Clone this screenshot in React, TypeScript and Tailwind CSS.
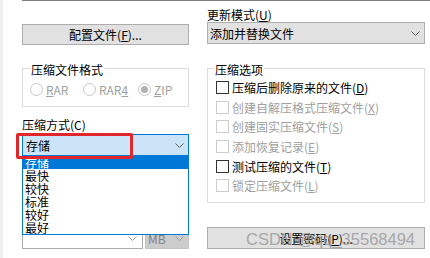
import { ReactNode } from "react";

const Chevron = ({ color = "#606060" }: { color?: string }) => (
  <svg width="9" height="5" viewBox="0 0 9 5" className="shrink-0">
    <path d="M0.5 0.5 L4.5 4.5 L8.5 0.5" fill="none" stroke={color} strokeWidth="1" />
  </svg>
);

const Radio = ({ checked, children }: { checked?: boolean; children: ReactNode }) => (
  <div className="flex items-center">
    <span className="flex h-[13px] w-[13px] items-center justify-center rounded-full border border-[#c6c6c6] bg-white">
      {checked && <span className="h-[7px] w-[7px] rounded-full bg-[#b2b2b2]" />}
    </span>
    <span className="ml-[3px] leading-[13px] text-[#a0a0a0]">{children}</span>
  </div>
);

const Check = ({ disabled, children }: { disabled?: boolean; children: ReactNode }) => (
  <div className="flex h-[19.6px] items-center">
    <span
      className={
        disabled
          ? "h-[13px] w-[13px] border border-[#cccccc] bg-white"
          : "h-[13px] w-[13px] border border-[#333333] bg-white"
      }
    />
    <span className={disabled ? "ml-[3px] leading-[13px] text-[#a0a0a0]" : "ml-[3px] leading-[13px] text-black"}>
      {children}
    </span>
  </div>
);

const methods = ["存储", "最快", "较快", "标准", "较好", "最好"];

export default function App() {
  return (
    <div className="relative flex h-[258px] w-[430px] flex-col overflow-hidden border-l-[3px] border-[#efefef] bg-white font-['Noto_Sans_CJK_SC',sans-serif] text-[12px] text-black">
      <div className="ml-[19px] h-px bg-[#7f7f7f]" />

      <div className="flex gap-[18px] pl-[19px]">
        {/* left column */}
        <div className="relative flex w-[167px] flex-col">
          <div className="mt-[23px] flex h-[21px] items-center justify-center border border-[#adadad] bg-[#e1e1e1] leading-[13px]">
            配置文件(<span className="underline">F</span>)...
          </div>

          <div className="relative mt-[23px] h-[39px] border border-[#dcdcdc]">
            <span className="absolute -top-[6px] left-[7px] bg-white px-px leading-[13px]">压缩文件格式</span>
            <div className="flex pl-[7px] pt-[14px]">
              <div className="w-[53px]">
                <Radio>
                  <span className="underline">R</span>AR
                </Radio>
              </div>
              <div className="w-[55px]">
                <Radio>
                  RAR<span className="underline">4</span>
                </Radio>
              </div>
              <Radio checked>
                <span className="underline">Z</span>IP
              </Radio>
            </div>
          </div>

          <div className="mt-[11px] leading-[13px]">压缩方式(C)</div>
          <div className="mt-[3px] flex h-[22px] items-center justify-between border border-[#0078d7] bg-[#cce4f7] pl-[3px] pr-[4px]">
            <span className="leading-[13px]">存储</span>
            <Chevron />
          </div>

          <div className="mt-[71px] flex gap-[2px]">
            <div className="flex h-[22px] w-[121px] items-center justify-end border border-[#adadad] bg-white pr-[5px]">
              <Chevron color="#a0a0a0" />
            </div>
            <div className="flex h-[22px] w-[44px] items-center justify-between border border-[#c4c4c4] bg-[#cccccc] pl-[2px] pr-[4px]">
              <span className="leading-[13px] text-[#838383]">MB</span>
              <Chevron color="#a0a0a0" />
            </div>
          </div>

          {/* opened drop-down list */}
          <div className="absolute left-0 top-[154px] w-[167px] border border-[#0078d7] bg-white">
            {methods.map((m, i) => (
              <div
                key={m}
                className={
                  i === 0
                    ? "h-[13px] bg-[#0078d7] pl-[2px] leading-[13px] text-white"
                    : "h-[13px] pl-[2px] leading-[13px] text-black"
                }
              >
                {m}
              </div>
            ))}
          </div>

          {/* red annotation box */}
          <div className="absolute -left-[6px] top-[132px] h-[26px] w-[117px] rounded-[2px] border-[3px] border-[#e3262b]" />
        </div>

        {/* right column */}
        <div className="flex w-[218px] flex-col">
          <div className="mt-[7px] leading-[13px]">
            更新模式(<span className="underline">U</span>)
          </div>
          <div className="mt-px flex h-[22px] items-center justify-between border border-[#adadad] bg-[#e1e1e1] pl-[2px] pr-[4px]">
            <span className="leading-[13px]">添加并替换文件</span>
            <Chevron />
          </div>

          <div className="relative mt-[24px] h-[135px] border border-[#dcdcdc]">
            <span className="absolute -top-[6px] left-[6px] bg-white px-px leading-[13px]">压缩选项</span>
            <div className="flex flex-col pl-[8px] pt-[9px]">
              <Check>压缩后删除原来的文件(<span className="underline">D</span>)</Check>
              <Check disabled>创建自解压格式压缩文件(<span className="underline">X</span>)</Check>
              <Check disabled>创建固实压缩文件(<span className="underline">S</span>)</Check>
              <Check disabled>添加恢复记录(<span className="underline">E</span>)</Check>
              <Check>测试压缩的文件(<span className="underline">T</span>)</Check>
              <Check disabled>锁定压缩文件(<span className="underline">L</span>)</Check>
            </div>
          </div>

          <div className="mt-[24px] flex h-[22px] items-center justify-center border border-[#adadad] bg-[#e1e1e1] leading-[13px]">
            设置密码(<span className="underline">P</span>)...
          </div>
        </div>
      </div>

      {/* watermark */}
      <div className="pointer-events-none absolute left-[243px] top-[231px] whitespace-nowrap font-['Liberation_Sans',sans-serif] text-[16.5px] leading-[16.5px] text-[#9a9a9a] opacity-80">
        CSDN @qq_35568494
      </div>
    </div>
  );
}
